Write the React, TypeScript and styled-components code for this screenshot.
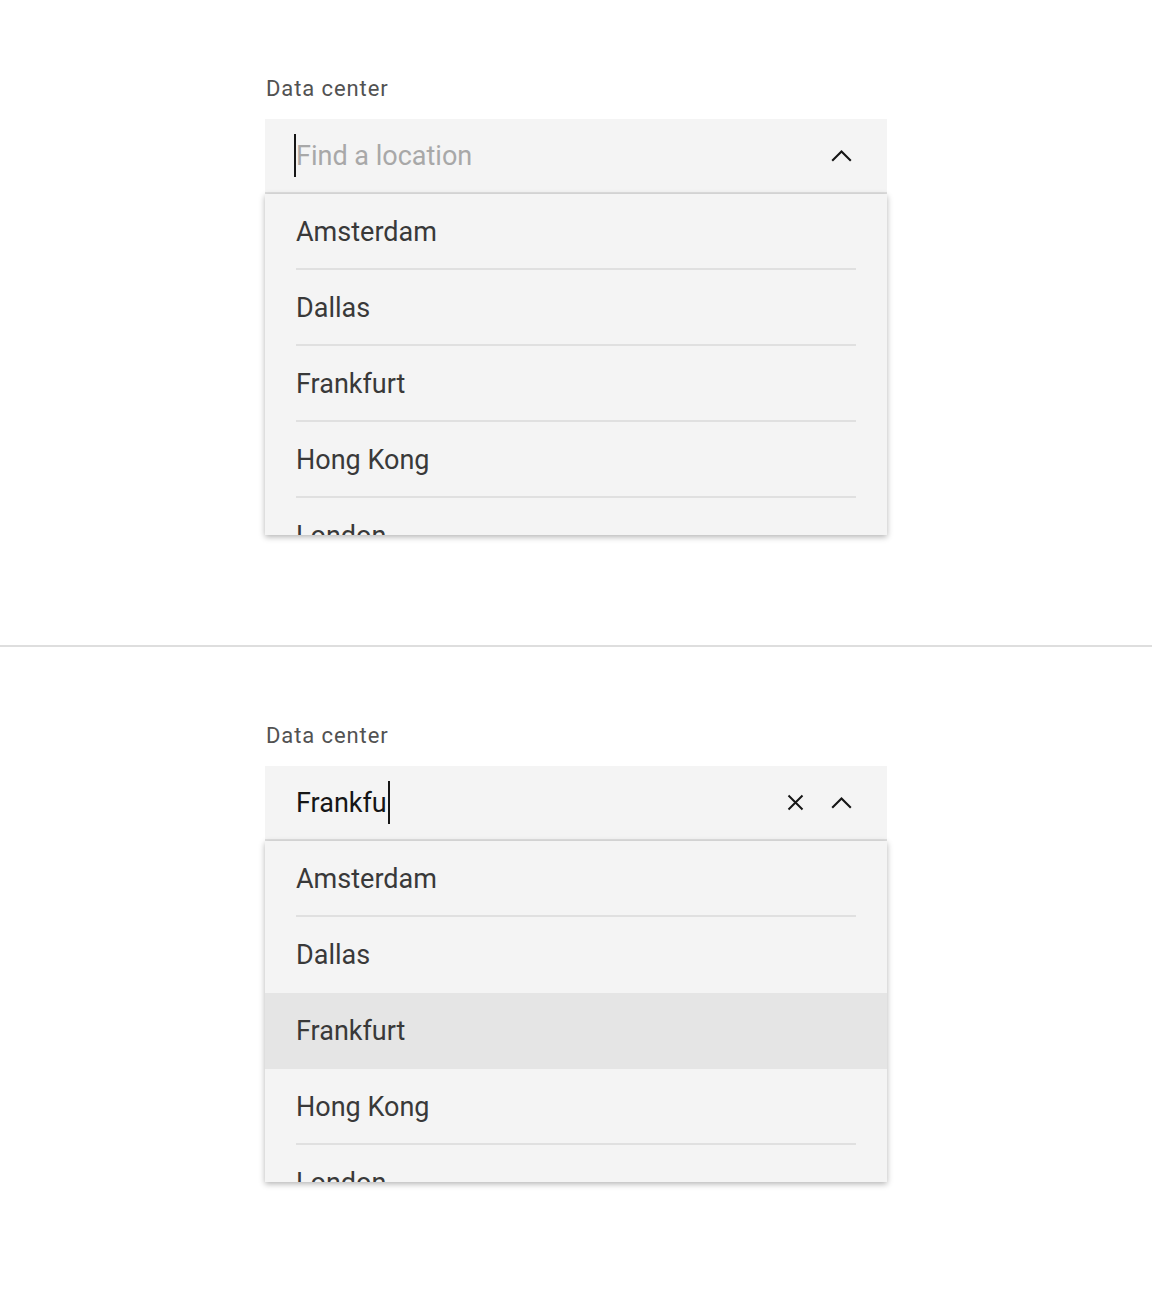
import styled, { createGlobalStyle } from 'styled-components';

const GlobalStyle = createGlobalStyle`
  html, body {
    margin: 0;
    padding: 0;
    background: #ffffff;
    font-family: Roboto, "Liberation Sans", sans-serif;
  }
  * {
    box-sizing: border-box;
  }
`;

const cities = ['Amsterdam', 'Dallas', 'Frankfurt', 'Hong Kong', 'London'];

const Page = styled.main`
  display: flex;
  flex-direction: column;
`;

const Section = styled.section`
  height: 645px;
  padding-top: 75px;
  display: flex;
  justify-content: center;
`;

const Divider = styled.hr`
  margin: 0;
  border: 0;
  height: 2px;
  background: #dedede;
`;

const ComboBox = styled.div`
  width: 622px;
  display: flex;
  flex-direction: column;
`;

const Label = styled.label`
  font-size: 22px;
  line-height: 28px;
  letter-spacing: 0.9px;
  color: #525252;
  padding-left: 1px;
  margin-bottom: 16px;
`;

const Field = styled.div`
  height: 75px;
  background: #f4f4f4;
  border-bottom: 2px solid #e0e0e0;
  display: flex;
  align-items: center;
  padding: 0 0 0 31px;
`;

const InputText = styled.div`
  flex: 1;
  display: flex;
  align-items: center;
  font-size: 27px;
  color: #161616;
`;

const Placeholder = styled.span`
  color: #a8a8a8;
`;

const Caret = styled.span<{ $overlap?: boolean }>`
  width: 2px;
  height: 43px;
  background: #161616;
  margin-left: ${({ $overlap }) => ($overlap ? '-2px' : '1px')};
`;

const IconButton = styled.span<{ $last?: boolean }>`
  width: 46px;
  height: 46px;
  display: flex;
  align-items: center;
  justify-content: center;
  color: #161616;
  margin-right: ${({ $last }) => ($last ? '23px' : '0')};
`;

const Menu = styled.ul`
  list-style: none;
  margin: 0;
  padding: 0;
  height: 341px;
  overflow: hidden;
  background: #f4f4f4;
  box-shadow: 0 2px 6px rgba(0, 0, 0, 0.3);
`;

const Item = styled.li<{ $active?: boolean }>`
  height: 76px;
  padding: 0 31px;
  display: flex;
  background: ${({ $active }) => ($active ? '#e5e5e5' : 'transparent')};
`;

const ItemLabel = styled.div<{ $divider: boolean }>`
  flex: 1;
  display: flex;
  align-items: center;
  border-top: 2px solid ${({ $divider }) => ($divider ? '#e0e0e0' : 'transparent')};
  margin-top: -2px;
  font-size: 27px;
  color: #393939;
`;

const ChevronUp = () => (
  <svg width="21" height="13" viewBox="0 0 21 13" fill="none">
    <polyline points="1.2,11.8 10.5,2.5 19.8,11.8" stroke="currentColor" strokeWidth="2.1" />
  </svg>
);

const Close = () => (
  <svg width="17" height="17" viewBox="0 0 17 17" fill="none">
    <path d="M1.5 1.5 L15.5 15.5 M15.5 1.5 L1.5 15.5" stroke="currentColor" strokeWidth="2" />
  </svg>
);

type DataCenterProps = {
  value: string;
  active?: string;
};

const DataCenter = ({ value, active }: DataCenterProps) => {
  const activeIndex = active ? cities.indexOf(active) : -1;
  return (
    <ComboBox>
      <Label>Data center</Label>
      <Field>
        <InputText>
          {value ? (
            <>
              {value}
              <Caret />
            </>
          ) : (
            <>
              <Caret $overlap />
              <Placeholder>Find a location</Placeholder>
            </>
          )}
        </InputText>
        {value && (
          <IconButton>
            <Close />
          </IconButton>
        )}
        <IconButton $last>
          <ChevronUp />
        </IconButton>
      </Field>
      <Menu>
        {cities.map((city, i) => {
          const divider = i > 0 && i !== activeIndex && i - 1 !== activeIndex;
          return (
            <Item key={city} $active={i === activeIndex}>
              <ItemLabel $divider={divider}>{city}</ItemLabel>
            </Item>
          );
        })}
      </Menu>
    </ComboBox>
  );
};

export default function App() {
  return (
    <>
      <GlobalStyle />
      <Page>
        <Section>
          <DataCenter value="" />
        </Section>
        <Divider />
        <Section>
          <DataCenter value="Frankfu" active="Frankfurt" />
        </Section>
      </Page>
    </>
  );
}
